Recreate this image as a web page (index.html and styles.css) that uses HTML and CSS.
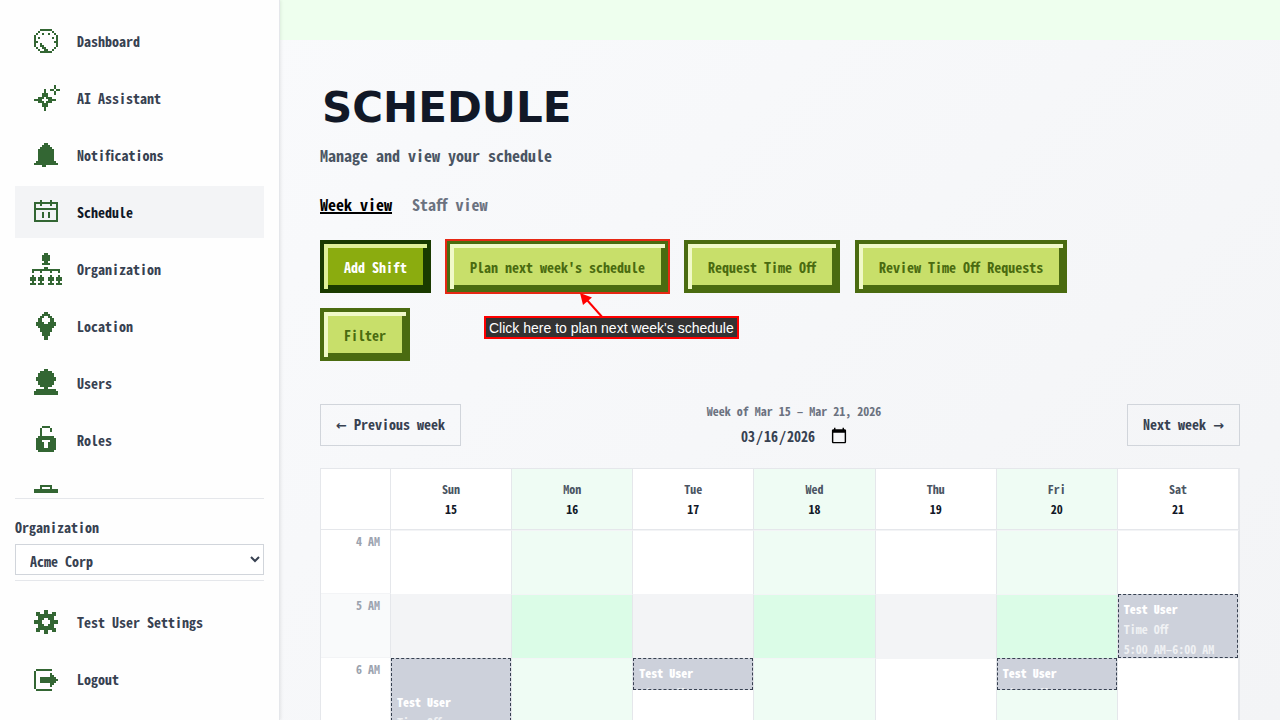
FILE: index.html
```html
<!DOCTYPE html>
<html lang="en">
<head>
<meta charset="utf-8">
<title>Schedule</title>
<meta name="viewport" content="width=device-width, initial-scale=1">
<link rel="stylesheet" href="styles.css">
</head>
<body>
<div class="app">
  <aside class="sidebar">
    <nav class="nav" aria-label="Main">
      <a class="nav-item" href="#dashboard"><svg class="icon" viewBox="-2 -2.5 16 16"><path d="M3 0h6M2 1h1M9 1h1M1 2h1M4 2h1M7 2h1M10 2h1M0 3h1M11 3h1M0 4h1M2 4h1M9 4h1M11 4h1M0 5h1M11 5h1M0 6h2M10 6h2M0 7h1M3 7h1M11 7h1M0 8h1M3 8h2M11 8h1M1 9h1M4 9h2M10 9h1M2 10h1M5 10h2M9 10h1M3 11h6"/></svg>Dashboard</a>
      <a class="nav-item" href="#assistant"><svg class="icon" viewBox="-2 -2 16 16"><path d="M10 0h1M10 1h1M8 2h2M11 2h2M10 3h1M10 4h1M5 2h1M5 3h1M4 4h3M4 5h3M2 6h3M6 6h3M0 7h4M7 7h4M2 8h3M6 8h3M4 9h3M4 10h3M5 11h1M5 12h1"/></svg>AI Assistant</a>
      <a class="nav-item" href="#notifications"><svg class="icon" viewBox="-2 -2.5 16 16"><path d="M5 0h2M4 1h4M3 2h6M2 3h8M2 4h8M2 5h8M2 6h8M2 7h8M2 8h8M1 9h10M0 10h12M4 11h2"/></svg>Notifications</a>
      <a class="nav-item nav-item-active" href="#schedule" aria-current="page"><svg class="icon" viewBox="-2 -2.5 16 16"><path d="M3 0h1M8 0h1M0 1h12M0 2h1M3 2h1M8 2h1M11 2h1M0 3h1M11 3h1M0 4h12M0 5h1M11 5h1M0 6h1M4 6h1M7 6h1M11 6h1M0 7h1M4 7h1M7 7h1M11 7h1M0 8h1M4 8h1M7 8h1M11 8h1M0 9h1M11 9h1M0 10h12"/></svg>Schedule</a>
      <a class="nav-item" href="#organization"><svg class="icon" viewBox="0 -.5 16 16"><path d="M7 0h2M6 1h4M6 2h4M6 3h4M7 4h2M6 5h4M7 7h2M1 8h14M1 9h1M5 9h1M10 9h1M14 9h1M1 11h1M5 11h1M10 11h1M14 11h1M0 12h3M4 12h3M9 12h3M13 12h3M0 13h3M4 13h3M9 13h3M13 13h3M1 14h1M5 14h1M10 14h1M14 14h1M0 15h3M4 15h3M9 15h3M13 15h3"/></svg>Organization</a>
      <a class="nav-item" href="#location"><svg class="icon" viewBox="-3 -1.5 16 16"><path d="M4 0h2M3 1h4M2 2h2M6 2h2M1 3h2M7 3h2M1 4h2M7 4h2M0 5h4M6 5h4M0 6h10M1 7h8M2 8h6M2 9h6M3 10h4M3 11h4M4 12h2M4 13h2"/></svg>Location</a>
      <a class="nav-item" href="#users"><svg class="icon" viewBox="-2 -1.5 16 16"><path d="M5 0h2M3 1h6M2 2h8M2 3h8M1 4h10M1 5h10M2 6h8M2 7h8M3 8h6M5 9h2M1 10h10M0 11h12M0 12h12"/></svg>Users</a>
      <a class="nav-item" href="#roles"><svg class="icon" viewBox="-3 -1.5 16 16"><path d="M3 0h4M2 1h1M7 1h1M2 2h1M7 2h1M2 3h1M2 4h1M1 5h8M0 6h10M0 7h3M7 7h3M0 8h4M6 8h4M0 9h4M6 9h4M0 10h4M6 10h4M0 11h10M1 12h8"/></svg>Roles</a>
      <a class="nav-item" href="#more" aria-label="More"><svg class="icon" viewBox="-2 -2.5 16 16"><path d="M3 0h6M3 1h1M8 1h1M0 2h12M0 3h12M0 4h12M0 5h12M0 6h12M0 7h12M0 8h12M0 9h12"/></svg></a>
    </nav>
    <div class="org">
      <label class="org-label" for="org">Organization</label>
      <select class="org-select" id="org"><option>Acme Corp</option></select>
    </div>
    <div class="account">
      <a class="nav-item" href="#settings"><svg class="icon" viewBox="-2 -2.5 16 16"><path d="M5 0h2M1 1h2M5 1h2M9 1h2M1 2h10M2 3h8M2 4h3M7 4h3M0 5h4M8 5h4M0 6h4M8 6h4M2 7h3M7 7h3M2 8h8M1 9h10M1 10h2M5 10h2M9 10h2M5 11h2"/></svg>Test User Settings</a>
      <a class="nav-item" href="#logout"><svg class="icon" viewBox="-2 -3.5 16 16"><path d="M1 0h8M0 1h1M0 2h1M8 2h1M0 3h1M8 3h2M0 4h1M3 4h8M0 5h1M3 5h9M0 6h1M3 6h8M0 7h1M8 7h2M0 8h1M8 8h1M0 9h1M1 10h8"/></svg>Logout</a>
    </div>
  </aside>

  <main class="main">
    <div class="banner"></div>
    <div class="content">
      <h1 class="title">SCHEDULE</h1>
      <p class="subtitle">Manage and view your schedule</p>
      <div class="tabs">
        <a class="tab tab-active" href="#week">Week view</a>
        <a class="tab" href="#staff">Staff view</a>
      </div>
      <div class="actions">
        <div class="action-row">
          <button class="btn btn-primary" type="button">Add Shift</button>
          <div class="guide">
            <button class="btn btn-guided" type="button">Plan next week's schedule</button>
            <svg class="guide-arrow" viewBox="0 0 24 26"><path d="M23 25L7 7" stroke="#f00" stroke-width="2"/><path d="M0 0l12 4.500-9 7.500z" fill="#f00"/></svg>
            <div class="guide-tip" role="tooltip">Click here to plan next week's schedule</div>
          </div>
          <button class="btn" type="button">Request Time Off</button>
          <button class="btn" type="button">Review Time Off Requests</button>
        </div>
        <div class="action-row">
          <button class="btn" type="button">Filter</button>
        </div>
      </div>

      <div class="week-nav">
        <button class="week-btn" type="button"><span class="arrow">←</span> Previous week</button>
        <div class="week-pick">
          <label class="week-label" for="date">Week of Mar 15 – Mar 21, 2026</label>
          <input class="week-date" id="date" type="date" value="2026-03-16">
        </div>
        <button class="week-btn" type="button">Next week <span class="arrow">→</span></button>
      </div>

      <div class="calendar">
        <table class="grid">
          <thead>
            <tr>
              <td class="corner"></td>
              <th scope="col">Sun<span class="day">15</span></th>
              <th scope="col" class="alt">Mon<span class="day">16</span></th>
              <th scope="col">Tue<span class="day">17</span></th>
              <th scope="col" class="alt">Wed<span class="day">18</span></th>
              <th scope="col">Thu<span class="day">19</span></th>
              <th scope="col" class="alt">Fri<span class="day">20</span></th>
              <th scope="col">Sat<span class="day">21</span></th>
            </tr>
          </thead>
          <tbody>
            <tr>
              <th class="time" scope="row">4 AM</th>
              <td></td><td class="alt"></td><td></td><td class="alt"></td><td></td><td class="alt"></td><td></td>
            </tr>
            <tr class="shade">
              <th class="time" scope="row">5 AM</th>
              <td></td><td class="alt"></td><td></td><td class="alt"></td><td></td><td class="alt"></td>
              <td><div class="event event-hour"><b>Test User</b><span>Time Off</span><span>5:00 AM–6:00 AM</span></div></td>
            </tr>
            <tr>
              <th class="time" scope="row">6 AM</th>
              <td><div class="event event-long"><b>Test User</b><span>Time Off</span></div></td>
              <td class="alt"></td>
              <td><div class="event event-half"><b>Test User</b><span>Time Off</span></div></td>
              <td class="alt"></td>
              <td></td>
              <td class="alt"><div class="event event-half"><b>Test User</b><span>Time Off</span></div></td>
              <td></td>
            </tr>
          </tbody>
        </table>
      </div>
    </div>
  </main>
</div>
</body>
</html>
```
FILE: styles.css
```css
* {
  box-sizing: border-box;
}

body {
  margin: 0;
  color: #374151;
}

body,
button,
select,
input {
  font-family: "Noto Sans CJK JP", "Liberation Mono", monospace;
  font-size: 14px;
  font-weight: 700;
  line-height: 20px;
  font-feature-settings: "hwid" 1;
}

a {
  color: inherit;
  text-decoration: none;
}

.app {
  display: flex;
  height: 100vh;
  overflow: hidden;
}

/* Sidebar */
.sidebar {
  position: relative;
  display: flex;
  flex: none;
  flex-direction: column;
  width: 280px;
  padding: 15px;
  background: #fefefe;
  border-right: 1px solid #e5e7eb;
  box-shadow: 1px 0 3px rgba(0, 0, 0, 0.08);
}

.nav {
  display: flex;
  flex: 1;
  flex-direction: column;
  gap: 5px;
  min-height: 0;
  margin-bottom: 5px;
  overflow: hidden;
}

.nav-item {
  display: flex;
  flex: none;
  align-items: center;
  gap: 15px;
  height: 52px;
  padding: 0 15px;
}

.nav-item-active {
  background: #f3f4f6;
  color: #111827;
}

.icon {
  width: 32px;
  height: 32px;
  fill: none;
  stroke: #336633;
  shape-rendering: crispEdges;
}

.org {
  padding: 18px 0 5px;
  border-top: 1px solid #e5e7eb;
}

.org-label {
  display: block;
  margin-bottom: 7px;
}

.org-select {
  display: block;
  width: 100%;
  height: 31px;
  padding: 2px 0 0 10px;
  background: #fff;
  border: 1px solid #d1d5db;
  border-radius: 0;
  color: #374151;
}

.account {
  display: flex;
  flex-direction: column;
  gap: 5px;
  padding-top: 15px;
  border-top: 1px solid #e5e7eb;
}

/* Main column */
.main {
  flex: 1;
  min-width: 0;
  overflow: hidden;
  background: linear-gradient(135deg, #f9fafc, #f3f4f6);
}

.banner {
  height: 40px;
  background: #eeffee;
}

.content {
  padding: 40px;
}

.title {
  margin: 0;
  padding-left: 2px;
  color: #111827;
  font-family: "DejaVu Sans", sans-serif;
  font-size: 42px;
  line-height: 56px;
}

.subtitle {
  margin: 7px 0 0;
  color: #4b5563;
  font-size: 16px;
  line-height: 24px;
}

.tabs {
  display: flex;
  gap: 20px;
  margin-top: 25px;
  color: #6b7280;
  font-size: 16px;
  line-height: 24px;
}

.tab-active {
  color: #000;
  text-decoration: underline;
  text-decoration-thickness: 2px;
}

.actions {
  display: flex;
  flex-direction: column;
  gap: 15px;
  margin-top: 24px;
}

.action-row {
  display: flex;
  gap: 15px;
}

.btn {
  height: 53px;
  padding: 0 20px;
  background: #c8df6a;
  border: 4px solid #4a6b10;
  box-shadow: inset 4px 4px #f0f9c8, inset -4px -4px #4a6b10;
  color: #4a6b10;
  white-space: nowrap;
}

.btn-primary {
  background: #8bac0f;
  border-color: #1a3a00;
  box-shadow: inset 4px 4px #e0f098, inset -4px -4px #1a3a00;
  color: #fff;
}

.guide {
  position: relative;
}

.btn-guided {
  outline: 2px solid #e62814;
  outline-offset: -1px;
}

.guide-arrow {
  position: absolute;
  top: 53px;
  left: 134px;
  width: 24px;
  height: 26px;
}

.guide-tip {
  position: absolute;
  top: 76px;
  left: 38px;
  padding: 1px 3px 0;
  background: #333;
  border: 2px solid #f00;
  color: #fff;
  font-family: "Liberation Sans", Arial, sans-serif;
  font-size: 14px;
  font-weight: 400;
  line-height: 18px;
  white-space: nowrap;
}

/* Week navigation */
.week-nav {
  display: flex;
  align-items: center;
  justify-content: space-between;
  margin-top: 40px;
}

.week-btn {
  height: 42px;
  padding: 0 15px;
  background: transparent;
  border: 1px solid #d1d5db;
  color: #374151;
}

.arrow {
  font-family: "DejaVu Sans", sans-serif;
  font-size: 13px;
}

.week-pick {
  display: flex;
  flex-direction: column;
  align-items: center;
  gap: 4px;
}

.week-label {
  color: #6b7280;
  font-size: 12px;
}

.week-date {
  height: 24px;
  padding: 0 0 2px;
  background: transparent;
  border: 0;
  color: #374151;
}

.week-date::-webkit-calendar-picker-indicator {
  width: 18px;
  height: 18px;
  padding: 0;
}

/* Calendar */
.calendar {
  margin-top: 19px;
  border: 1px solid #e5e7eb;
}

.grid {
  width: 100%;
  border-spacing: 0;
  table-layout: fixed;
  background: #fff;
  font-size: 12px;
}

.grid th,
.grid td {
  padding: 0;
  border-right: 1px solid #e5e7eb;
}

.grid thead th,
.grid thead td {
  height: 61px;
  border-bottom: 1px solid #e5e7eb;
  color: #4b5563;
}

.grid .corner {
  width: 70px;
}

.day {
  display: block;
  color: #111827;
}

.grid tbody td {
  position: relative;
  height: 64px;
  border-top: 1px solid #f3f4f6;
}

.grid .time {
  padding: 1px 10px;
  border-bottom: 1px solid #f3f4f6;
  color: #9ca3af;
  text-align: right;
  vertical-align: top;
}

.grid .alt {
  background: #effcf4;
}

.shade td {
  background: #f3f4f6;
}

.shade .time {
  background: #f9fafb;
}

.grid .shade .alt {
  background: #dbfce7;
}

.event {
  position: absolute;
  top: -1px;
  right: 0;
  left: 0;
  z-index: 1;
  padding: 4px 5px;
  overflow: hidden;
  background: #cdd1db;
  border: 1px dashed #374151;
  color: #fff;
  white-space: nowrap;
}

.event b,
.event span {
  display: block;
}

.event span {
  color: #f0f1f4;
}

.event-hour {
  height: 64px;
}

.event-half {
  height: 32px;
}

.event-long {
  height: 128px;
  padding-top: 33px;
}
```
